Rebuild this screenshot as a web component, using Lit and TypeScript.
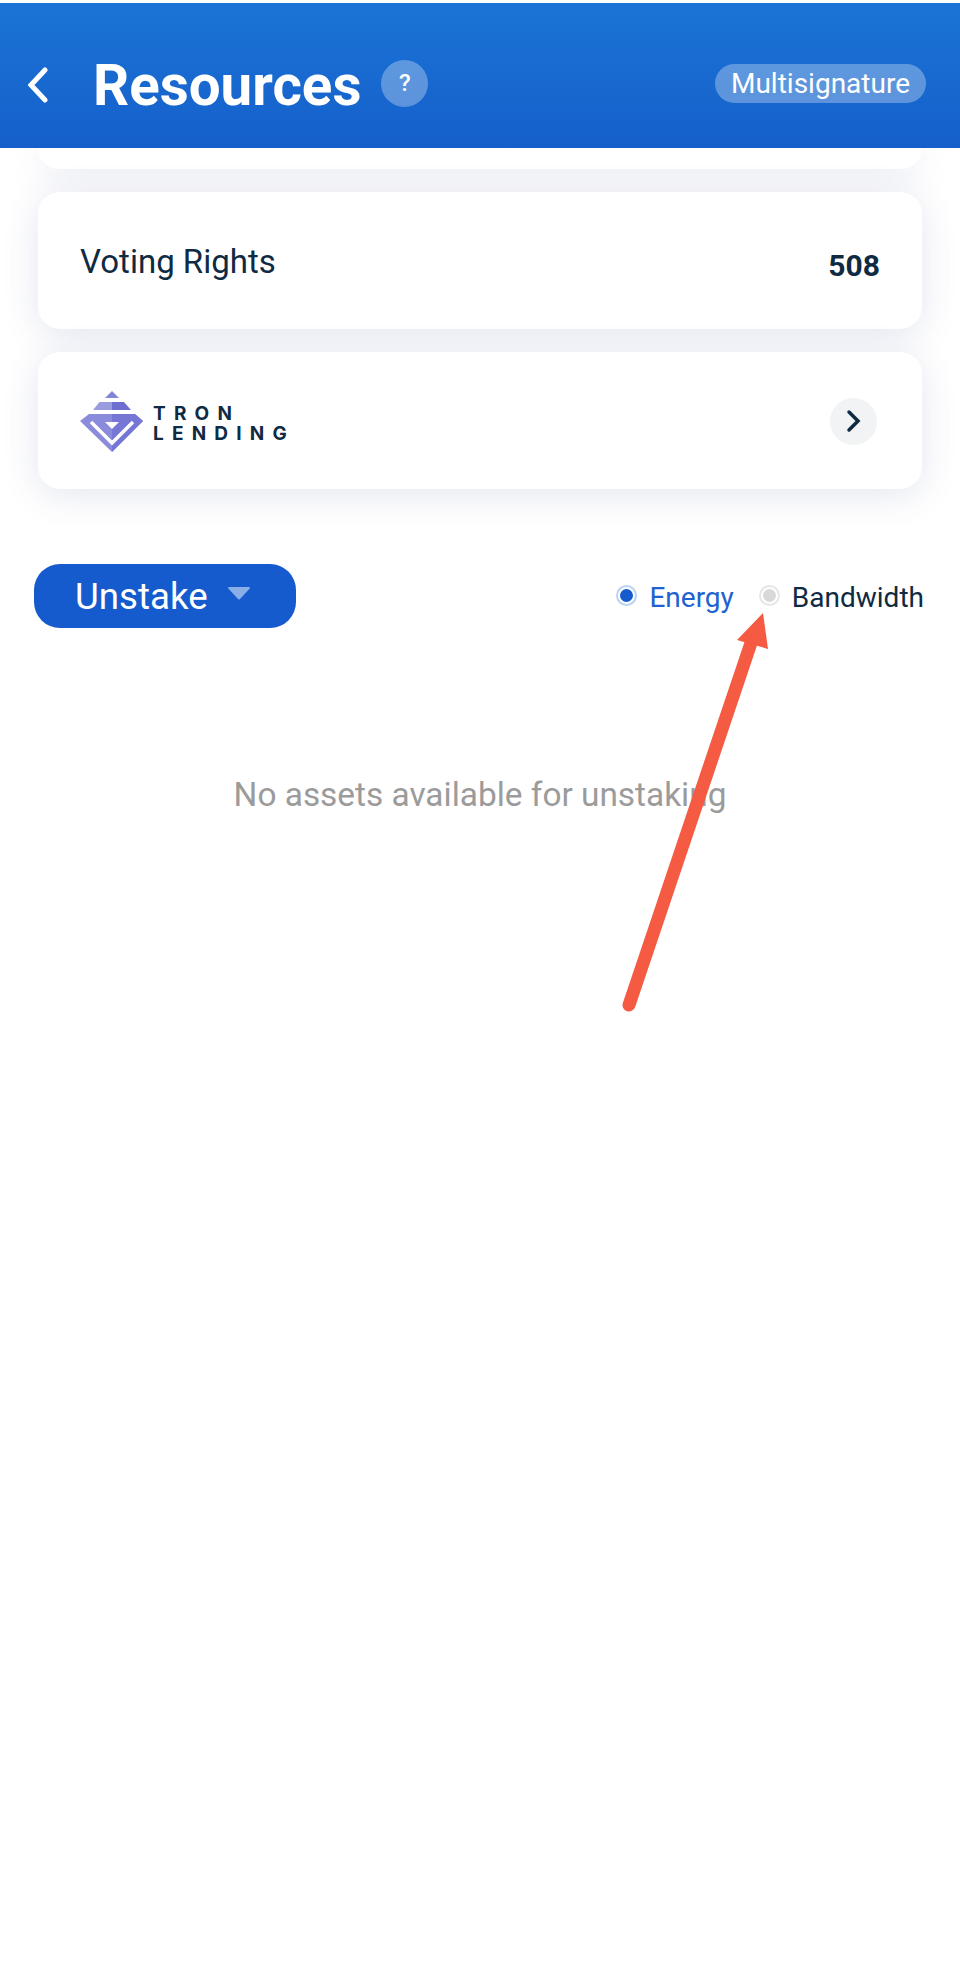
import { LitElement, css, html, svg } from "lit";
import { customElement } from "lit/decorators.js";

@customElement("app-root")
export class AppRoot extends LitElement {
  static styles = css`
    :host {
      display: block;
      position: relative;
      height: 1985px;
      padding-top: 3px;
      box-sizing: border-box;
      background: #fff;
      overflow: hidden;
      font-family: Roboto, "Liberation Sans", sans-serif;
      color: #0f2a43;
    }
    .header {
      position: relative;
      z-index: 1;
      height: 145px;
      box-sizing: border-box;
      padding: 18px 34px 0 28px;
      display: flex;
      align-items: center;
      color: #fff;
      background: linear-gradient(180deg, #1b74d5, #155fcb);
    }
    .back {
      width: 20px;
      height: 36px;
    }
    .title {
      margin: 2px 0 0 45px;
      font-size: 56.5px;
      font-weight: 700;
      line-height: 66px;
    }
    .help {
      width: 47px;
      height: 47px;
      margin: -3px 0 0 20px;
      border-radius: 50%;
      background: rgba(255, 255, 255, 0.3);
      display: flex;
      align-items: center;
      justify-content: center;
      font-size: 24px;
      font-weight: 500;
    }
    .pill {
      margin: -2px 0 0 auto;
      height: 39px;
      padding: 0 16px;
      border-radius: 20px;
      background: rgba(255, 255, 255, 0.3);
      display: flex;
      align-items: center;
      font-size: 28px;
    }
    .cards {
      display: flex;
      flex-direction: column;
      gap: 23px;
      padding: 0 38px;
    }
    .card {
      height: 137px;
      box-sizing: border-box;
      padding: 0 42px;
      border-radius: 22px;
      background: #fff;
      display: flex;
      align-items: center;
      justify-content: space-between;
      box-shadow: 0 6px 36px rgba(65, 80, 150, 0.14);
    }
    .card.cut {
      height: 21px;
      border-radius: 0 0 22px 22px;
    }
    .label {
      font-size: 33px;
      margin-top: 1px;
    }
    .value {
      font-size: 30px;
      font-weight: 700;
      margin-top: 9px;
    }
    .logo {
      display: flex;
      align-items: center;
      gap: 10px;
      margin-top: 2px;
    }
    .logo svg {
      width: 63px;
      height: 61px;
      display: block;
    }
    .logo-text {
      font-family: Inter, sans-serif;
      font-size: 19px;
      font-weight: 700;
      line-height: 20px;
      letter-spacing: 8.2px;
      white-space: nowrap;
      margin-top: 4px;
    }
    .logo-text div {
      height: 20px;
    }
    .go {
      width: 47px;
      height: 47px;
      margin-right: 3px;
      margin-top: 1px;
      border-radius: 50%;
      background: #f2f3f5;
      display: flex;
      align-items: center;
      justify-content: center;
    }
    .toolbar {
      margin-top: 75px;
      padding: 0 36px 0 34px;
      display: flex;
      align-items: center;
      justify-content: space-between;
    }
    .unstake {
      width: 262px;
      height: 64px;
      box-sizing: border-box;
      padding-left: 41px;
      border-radius: 26px;
      background: #155bcd;
      color: #fff;
      display: flex;
      align-items: center;
      font-size: 36.7px;
    }
    .caret {
      width: 22px;
      height: 14px;
      margin-left: 20px;
      margin-top: -6px;
    }
    .radios {
      display: flex;
      align-items: center;
      font-size: 28px;
      margin-top: 3px;
    }
    .radio {
      display: flex;
      align-items: center;
      gap: 14px;
    }
    .radio + .radio {
      margin-left: 27px;
    }
    .radio.on {
      color: #1e63cf;
    }
    .dot {
      width: 13px;
      height: 13px;
      border-radius: 50%;
      background: #d8d8d8;
      border: 2px solid #fff;
      box-shadow: 0 0 0 2px #e6e6e6;
      margin-top: -4px;
    }
    .radio.on .dot {
      background: #155bcd;
      box-shadow: 0 0 0 2px #bcd2f3;
    }
    .empty {
      margin-top: 146px;
      text-align: center;
      font-size: 33.4px;
      line-height: 42px;
      color: #9b9b9b;
    }
    .arrow {
      position: absolute;
      left: 600px;
      top: 600px;
      width: 200px;
      height: 420px;
    }
  `;

  render() {
    return html`
      <header class="header">
        <svg class="back" viewBox="0 0 20 36">
          <path d="M17 3 3 18l14 15" fill="none" stroke="#fff" stroke-width="5" stroke-linecap="round" />
        </svg>
        <h1 class="title">Resources</h1>
        <div class="help">?</div>
        <div class="pill">Multisignature</div>
      </header>
      <div class="cards">
        <div class="card cut"></div>
        <div class="card">
          <span class="label">Voting Rights</span>
          <span class="value">508</span>
        </div>
        <div class="card">
          <div class="logo">
            ${this.renderLogo()}
            <div class="logo-text">
              <div>TRON</div>
              <div>LENDING</div>
            </div>
          </div>
          <div class="go">
            <svg width="16" height="24" viewBox="0 0 16 24">
              <path d="M3 3l9 9-9 9" fill="none" stroke="#0f2a43" stroke-width="3.5" stroke-linecap="round" />
            </svg>
          </div>
        </div>
      </div>
      <div class="toolbar">
        <div class="unstake">
          Unstake
          <svg class="caret" viewBox="0 0 22 14">
            <path d="M1 1h20a1 1 0 0 1 .7 1.6L12 13a1.4 1.4 0 0 1-2 0L.3 2.6A1 1 0 0 1 1 1z" fill="#8aaee8" />
          </svg>
        </div>
        <div class="radios">
          <div class="radio on"><span class="dot"></span>Energy</div>
          <div class="radio"><span class="dot"></span>Bandwidth</div>
        </div>
      </div>
      <div class="empty">No assets available for unstaking</div>
      <svg class="arrow" viewBox="600 600 200 420">
        <path d="M629 1005 752 640" stroke="#f55a42" stroke-width="13" stroke-linecap="round" fill="none" />
        <polygon points="763,613 768,649 737,640" fill="#f55a42" />
      </svg>
    `;
  }

  // coordinates are page pixels, shifted by the viewBox
  renderLogo() {
    return html`<svg viewBox="80 392 63 61">
      ${svg`
        <polygon points="112,392 119,399 105,399" fill="#8585d8" />
        <polygon points="99.5,403 112,403 112,411 93,411" fill="#9b9be0" />
        <polygon points="112,403 124,403 131,411 112,411" fill="#6e6ed0" />
        <polygon points="89,415 135,415 143,422 112,453 80,422" fill="#8b8bdc" />
        <polygon points="112,415 135,415 143,422 112,453" fill="#7676d4" />
        <polyline points="91,423 112,444 133,423" fill="none" stroke="#fff" stroke-width="3.5" />
        <polygon points="105,423 119,423 112,430" fill="#fff" />
      `}
    </svg>`;
  }
}
